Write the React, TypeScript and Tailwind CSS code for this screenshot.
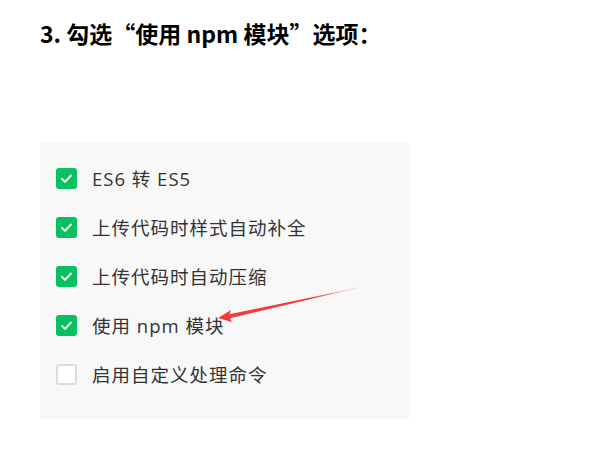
const options = [
  { label: "ES6 转 ES5", checked: true },
  { label: "上传代码时样式自动补全", checked: true },
  { label: "上传代码时自动压缩", checked: true },
  { label: "使用 npm 模块", checked: true },
  { label: "启用自定义处理命令", checked: false },
];

function Check({ checked }: { checked: boolean }) {
  if (!checked) {
    return <div className="size-[21px] rounded-[3px] border-2 border-[#dcdcdc] bg-white shrink-0" />;
  }
  return (
    <div className="size-[21px] rounded-[3px] bg-[#07c160] grid place-items-center shrink-0">
      <svg viewBox="0 0 20 20" className="size-[15px]" fill="none">
        <path d="M4 10.5l4 4 8-8.5" stroke="white" strokeWidth="2.6" strokeLinecap="round" strokeLinejoin="round" />
      </svg>
    </div>
  );
}

export default function App() {
  return (
    <main
      className="w-[611px] h-[451px] bg-white relative overflow-hidden"
      style={{ fontFamily: '"Open Sans", "Noto Sans CJK SC", sans-serif' }}
    >
      <h1
        className="pl-[40px] pt-[16px] text-[23px] leading-[34px] font-bold text-black"
        style={{ fontFamily: '"Noto Sans CJK SC", sans-serif' }}
      >
        3. 勾选“使用 npm 模块”选项：
      </h1>

      <div className="ml-[40px] mt-[93px] w-[369px] h-[276px] bg-[#f8f8f8] pt-[25px] pl-[56px]">
        <div className="flex flex-col gap-[28px] -ml-[40px]">
          {options.map((o) => (
            <div key={o.label} className="flex items-center gap-[15px] h-[21px]">
              <Check checked={o.checked} />
              <span className="text-[18.5px] text-[#333] tracking-[1px]">{o.label}</span>
            </div>
          ))}
        </div>
      </div>

      <svg className="absolute left-0 top-0 pointer-events-none" width="611" height="451">
        <defs>
          <linearGradient id="g" x1="366" y1="286" x2="220" y2="318" gradientUnits="userSpaceOnUse">
            <stop offset="0" stopColor="#f43a3a" stopOpacity="0.2" />
            <stop offset="0.4" stopColor="#f43a3a" />
            <stop offset="1" stopColor="#f43a3a" />
          </linearGradient>
        </defs>
        <polygon points="366,286 228,314.5 229,318.5" fill="url(#g)" />
        <polygon points="218,318 231,310 229,316 232,322" fill="#f43a3a" />
      </svg>
    </main>
  );
}
